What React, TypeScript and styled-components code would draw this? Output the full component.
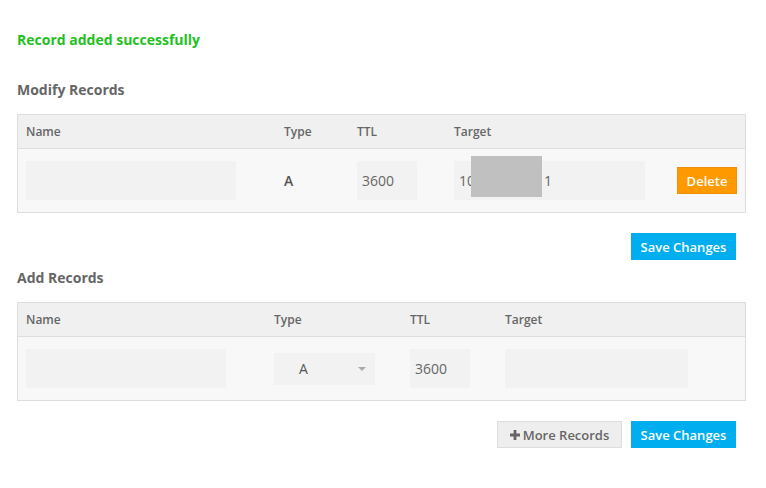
import React from "react";
import styled, { createGlobalStyle } from "styled-components";

const Global = createGlobalStyle`
  html, body { margin: 0; padding: 0; background: #fff; }
  body { font-family: "Open Sans", "Liberation Sans", sans-serif; color: #666; }
  * { box-sizing: border-box; }
`;

const Page = styled.div`
  padding: 30px 20px 40px 17px;
  width: 766px;
`;

const Success = styled.div`
  color: #1fc11f;
  font-weight: 700;
  font-size: 14px;
  line-height: 20px;
  height: 20px;
`;

const Heading = styled.h3<{ $top: number }>`
  margin: ${(p) => p.$top}px 0 14px 0;
  font-size: 14px;
  line-height: 20px;
  font-weight: 700;
  color: #666;
`;

const Table = styled.div`
  width: 729px;
  border: 1px solid #dddddd;
  background: #f8f8f8;
`;

const HeaderRow = styled.div<{ $cols: string }>`
  display: grid;
  grid-template-columns: ${(p) => p.$cols};
  align-items: center;
  height: 34px;
  padding: 0 8px;
  background: #f0f0f0;
  border-bottom: 1px solid #dddddd;
  font-size: 12px;
  font-weight: 600;
  color: #666;
`;

const BodyRow = styled.div<{ $cols: string }>`
  display: grid;
  grid-template-columns: ${(p) => p.$cols};
  align-items: center;
  height: 63px;
  padding: 0 8px;
`;

const Field = styled.div<{ $w: number }>`
  width: ${(p) => p.$w}px;
  height: 39px;
  background: #f2f2f2;
  font-size: 14px;
  color: #666;
  display: flex;
  align-items: center;
  padding-left: 5px;
  position: relative;
`;

const StaticValue = styled.div`
  font-size: 14px;
  font-weight: 600;
  color: #555;
`;

const Redact = styled.div`
  position: absolute;
  left: 17px;
  top: -5px;
  width: 71px;
  height: 41px;
  background: #c0c0c0;
`;

const Hidden = styled.span`
  display: inline-block;
  width: 69px;
`;

const Select = styled.div`
  width: 101px;
  height: 32px;
  background: #f2f2f2;
  display: flex;
  align-items: center;
  justify-content: space-between;
  padding: 0 9px 0 25px;
  font-size: 14px;
  color: #555;
`;

const Caret = styled.span`
  width: 0;
  height: 0;
  border-left: 4px solid transparent;
  border-right: 4px solid transparent;
  border-top: 4px solid #aaa;
`;

const Button = styled.button<{ $variant: "primary" | "danger" | "default"; $w?: number }>`
  font-family: "Open Sans", "Liberation Sans", sans-serif;
  font-size: 13px;
  font-weight: 600;
  height: 27px;
  ${(p) => (p.$w ? `width: ${p.$w}px;` : "")}
  padding: 0;
  cursor: pointer;
  display: inline-flex;
  align-items: center;
  justify-content: center;
  gap: 3px;
  border: 1px solid
    ${(p) => (p.$variant === "primary" ? "#00aeef" : p.$variant === "danger" ? "#f0900a" : "#dddddd")};
  background: ${(p) => (p.$variant === "primary" ? "#00aeef" : p.$variant === "danger" ? "#ff9900" : "#eeeeee")};
  color: ${(p) => (p.$variant === "default" ? "#666" : "#fff")};
`;

const Actions = styled.div`
  width: 719px;
  display: flex;
  justify-content: flex-end;
  gap: 9px;
  margin-top: 20px;
`;

const DeleteCell = styled.div`
  display: flex;
  justify-content: flex-end;
`;

const modCols = "258px 73px 97px 1fr auto";
const addCols = "248px 136px 95px 1fr";

export default function App() {
  return (
    <Page>
      <Global />
      <Success>Record added successfully</Success>

      <Heading $top={30}>Modify Records</Heading>
      <Table>
        <HeaderRow $cols={modCols}>
          <span>Name</span>
          <span>Type</span>
          <span>TTL</span>
          <span>Target</span>
          <span />
        </HeaderRow>
        <BodyRow $cols={modCols}>
          <Field $w={210} />
          <StaticValue>A</StaticValue>
          <Field $w={60}>3600</Field>
          <Field $w={191}>
            10<Hidden />1
            <Redact />
          </Field>
          <DeleteCell>
            <Button $variant="danger" $w={60}>Delete</Button>
          </DeleteCell>
        </BodyRow>
      </Table>
      <Actions>
        <Button $variant="primary" $w={105}>Save Changes</Button>
      </Actions>

      <Heading $top={8}>Add Records</Heading>
      <Table>
        <HeaderRow $cols={addCols}>
          <span>Name</span>
          <span>Type</span>
          <span>TTL</span>
          <span>Target</span>
        </HeaderRow>
        <BodyRow $cols={addCols}>
          <Field $w={200} />
          <Select>
            <span>A</span>
            <Caret />
          </Select>
          <Field $w={60}>3600</Field>
          <Field $w={183} />
        </BodyRow>
      </Table>
      <Actions>
        <Button $variant="default" $w={125}>
          <svg width="10" height="10" viewBox="0 0 10 10">
            <path d="M3.6 0h2.8v3.6H10v2.8H6.4V10H3.6V6.4H0V3.6h3.6z" fill="#666" />
          </svg>
          More Records
        </Button>
        <Button $variant="primary" $w={105}>Save Changes</Button>
      </Actions>
    </Page>
  );
}
